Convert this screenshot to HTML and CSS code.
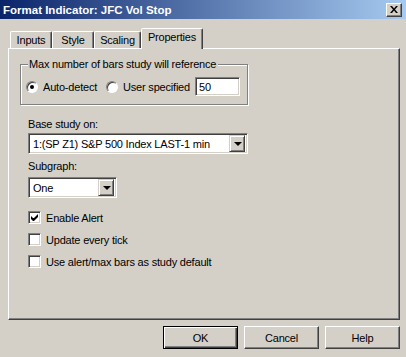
FILE: index.html
```html
<!DOCTYPE html>
<html lang="en">
<head>
  <meta charset="UTF-8" />
  <title>Format Indicator: JFC Vol Stop</title>
  <link rel="stylesheet" href="styles.css">
</head>
<body>
  <div class="window">
    <div class="titlebar">
      <span class="title">Format Indicator: JFC Vol Stop</span>
      <span class="close">
        <svg width="8" height="7" viewBox="0 0 8 7"><path d="M0 0h2l2 2.5 2-2.5h2l-3 3.5 3 3.5h-2l-2-2.5-2 2.5h-2l3-3.5z" fill="#000"/></svg>
      </span>
    </div>

    <div class="body">
      <div class="tabs">
        <div class="tab t-inputs">Inputs</div>
        <div class="tab t-style">Style</div>
        <div class="tab t-scaling">Scaling</div>
        <div class="tab active">Properties</div>
      </div>

      <div class="panel">
        <!-- bars group -->
        <div class="group">
          <span class="legend">Max number of bars study will reference</span>
          <div class="radio-row">
            <label class="radio"><span class="dot checked"></span>Auto-detect</label>
            <label class="radio"><span class="dot"></span>User specified</label>
            <span class="textbox">50</span>
          </div>
        </div>

        <div class="field-label first">Base study on:</div>
        <div class="combo wide">
          <span class="combo-text">1:(SP Z1) S&amp;P 500 Index LAST-1 min</span>
          <span class="combo-btn"><span class="arrow"></span></span>
        </div>

        <div class="field-label">Subgraph:</div>
        <div class="combo narrow">
          <span class="combo-text">One</span>
          <span class="combo-btn"><span class="arrow"></span></span>
        </div>

        <div class="checks">
          <label class="check">
            <span class="box">
              <svg width="7" height="7" viewBox="0 0 7 7"><path d="M0 2v3l2 2h1l4-4v-3l-4 4h-1z" fill="#000"/></svg>
            </span>Enable Alert
          </label>
          <label class="check"><span class="box"></span>Update every tick</label>
          <label class="check"><span class="box"></span>Use alert/max bars as study default</label>
        </div>
      </div>

      <div class="buttons">
        <button class="btn default">OK</button>
        <button class="btn">Cancel</button>
        <button class="btn">Help</button>
      </div>
    </div>
  </div>
</body>
</html>
```

FILE: styles.css
```css
* {
  box-sizing: border-box;
  margin: 0;
  padding: 0;
}
body {
  font-family: "Liberation Sans", Arial, sans-serif;
  font-size: 11px;
  letter-spacing: -0.2px;
  color: #000;
  background: #d4d0c8;
}
.window {
  width: 406px;
  height: 357px;
  background: #d4d0c8;
}
.titlebar {
  height: 19px;
  display: flex;
  align-items: center;
  justify-content: space-between;
  padding: 0 4px 0 3px;
  background: linear-gradient(to right, #0a246a, #a6caf0);
}
.title {
  color: #fff;
  font-weight: bold;
  font-size: 11.5px;
  letter-spacing: 0;
}
.close {
  width: 16px;
  height: 14px;
  display: flex;
  align-items: center;
  justify-content: center;
  background: #d4d0c8;
  border: 1px solid;
  border-color: #fff #404040 #404040 #fff;
  box-shadow: inset -1px -1px 0 #808080;
}
.body {
  padding: 9px 6px 0 8px;
}
.tabs {
  display: flex;
  align-items: flex-end;
  height: 20px;
  padding-left: 2px;
}
.tab {
  height: 17px;
  padding-top: 2px;
  text-align: center;
  border: 1px solid;
  border-bottom: none;
  border-color: #fff #404040 transparent #fff;
  box-shadow: inset -1px 0 0 #808080;
  border-radius: 2px 2px 0 0;
}
.t-inputs { width: 42px; }
.t-style { width: 42px; }
.t-scaling { width: 47px; }
.tab.active {
  width: 62px;
  height: 21px;
  margin-bottom: -1px;
  background: #d4d0c8;
  position: relative;
  z-index: 1;
}
.panel {
  height: 272px;
  border: 1px solid;
  border-color: #fff #404040 #404040 #fff;
  box-shadow: inset -1px -1px 0 #808080;
  padding: 15px 0 0 19px;
}
.group {
  position: relative;
  width: 228px;
  height: 41px;
  margin-left: -8px;
  border: 1px solid #808080;
  box-shadow: inset 1px 1px 0 #fff, 1px 1px 0 #fff;
  padding: 12px 0 0 5px;
}
.legend {
  position: absolute;
  top: -7px;
  left: 7px;
  padding: 0 2px 0 1px;
  background: #d4d0c8;
  line-height: 13px;
}
.radio-row {
  display: flex;
  align-items: center;
}
.radio {
  display: flex;
  align-items: center;
  margin-right: 9px;
}
.radio + .radio {
  margin-right: 5px;
}
.dot {
  width: 12px;
  height: 12px;
  border-radius: 50%;
  border: 1px solid;
  border-color: #808080 #fff #fff #808080;
  box-shadow: inset 1px 1px 0 #404040;
  background: #fff;
  margin-right: 5px;
  display: flex;
  align-items: center;
  justify-content: center;
}
.dot.checked::after {
  content: "";
  width: 4px;
  height: 4px;
  border-radius: 50%;
  background: #000;
}
.textbox, .combo {
  border: 1px solid;
  border-color: #808080 #fff #fff #808080;
  box-shadow: inset 1px 1px 0 #404040, inset -1px -1px 0 #d4d0c8;
  background: #fff;
}
.textbox {
  width: 45px;
  height: 19px;
  padding: 3px 0 0 3px;
}
.field-label {
  margin-top: 6px;
  line-height: 13px;
}
.field-label.first {
  margin-top: 13px;
}
.combo {
  display: flex;
  align-items: center;
  justify-content: space-between;
  height: 21px;
  margin-top: 3px;
  padding: 2px;
}
.combo.wide {
  width: 220px;
  margin-top: 2px;
}
.combo.narrow {
  width: 89px;
  margin-top: 4px;
}
.combo-text {
  padding-left: 2px;
  white-space: nowrap;
}
.combo-btn {
  width: 16px;
  height: 17px;
  background: #d4d0c8;
  border: 1px solid;
  border-color: #d4d0c8 #404040 #404040 #d4d0c8;
  box-shadow: inset 1px 1px 0 #fff, inset -1px -1px 0 #808080;
  display: flex;
  align-items: center;
  justify-content: center;
}
.arrow {
  width: 0;
  height: 0;
  border-left: 4px solid transparent;
  border-right: 4px solid transparent;
  border-top: 4px solid #000;
  margin-left: 1px;
}
.checks {
  margin-top: 13px;
  display: flex;
  flex-direction: column;
  gap: 9px;
}
.check {
  display: flex;
  align-items: center;
  height: 13px;
}
.box {
  width: 13px;
  height: 13px;
  margin-right: 5px;
  border: 1px solid;
  border-color: #808080 #fff #fff #808080;
  box-shadow: inset 1px 1px 0 #404040, inset -1px -1px 0 #d4d0c8;
  background: #fff;
  display: flex;
  align-items: center;
  justify-content: center;
}
.buttons {
  display: flex;
  justify-content: flex-end;
  gap: 6px;
  margin-top: 6px;
}
.btn {
  width: 75px;
  height: 23px;
  font-family: "Liberation Sans", Arial, sans-serif;
  font-size: 11px;
  letter-spacing: -0.2px;
  background: #d4d0c8;
  border: 1px solid;
  border-color: #fff #404040 #404040 #fff;
  box-shadow: inset -1px -1px 0 #808080;
}
.btn.default {
  border: 1px solid #000;
  box-shadow: inset 1px 1px 0 #fff, inset -1px -1px 0 #404040, inset -2px -2px 0 #808080;
}
```
